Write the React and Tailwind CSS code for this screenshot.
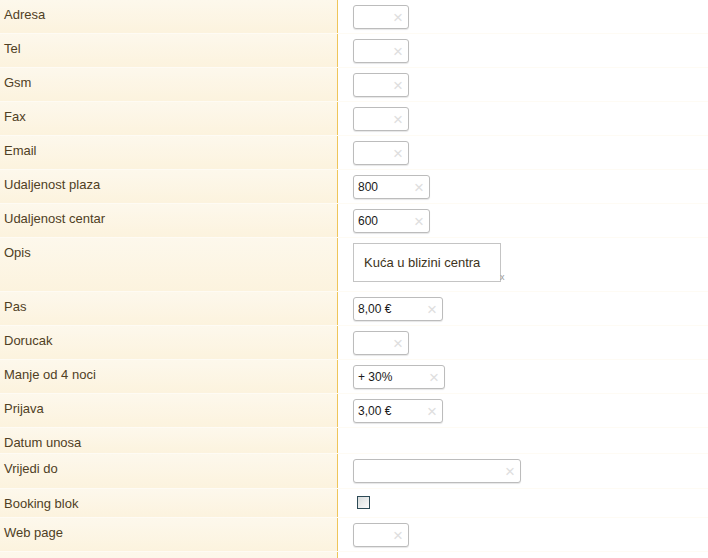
import React from 'react';

const rows = [
    { label: 'Adresa', kind: 'input', w: 'w-[56px]' },
    { label: 'Tel', kind: 'input', w: 'w-[56px]' },
    { label: 'Gsm', kind: 'input', w: 'w-[56px]' },
    { label: 'Fax', kind: 'input', w: 'w-[56px]' },
    { label: 'Email', kind: 'input', w: 'w-[56px]' },
    { label: 'Udaljenost plaza', kind: 'input', w: 'w-[77px]', value: '800' },
    { label: 'Udaljenost centar', kind: 'input', w: 'w-[77px]', value: '600' },
    { label: 'Opis', kind: 'textarea', h: 'h-[54px]' },
    { label: 'Pas', kind: 'input', w: 'w-[90px]', value: '8,00 €' },
    { label: 'Dorucak', kind: 'input', w: 'w-[56px]' },
    { label: 'Manje od 4 noci', kind: 'input', w: 'w-[92px]', value: '+ 30%' },
    { label: 'Prijava', kind: 'input', w: 'w-[90px]', value: '3,00 €' },
    { label: 'Datum unosa', kind: 'none', h: 'h-[26px]' },
    { label: 'Vrijedi do', kind: 'input', w: 'w-[168px]', h: 'h-[35px]' },
    { label: 'Booking blok', kind: 'checkbox', h: 'h-[29px]' },
    { label: 'Web page', kind: 'input', w: 'w-[56px]' },
    { label: '', kind: 'none' },
];

// text field with the little clear "x" on the right
const ClearInput = ({ w, value }) => (
    <div className={`flex items-center justify-between ${w} h-[24px] rounded-[3px] border border-[#bcbcbc] bg-white pl-[4px] pr-[5px] shadow-[0_1px_1px_rgba(0,0,0,0.1)]`}>
        <span className="text-[12px] leading-[16px] text-[#1a1a1a]">{value}</span>
        <span className="text-[17px] leading-[15px] text-[#dedede]">×</span>
    </div>
);

const Field = ({ row }) => {
    if (row.kind === 'input') return <ClearInput w={row.w} value={row.value} />;
    if (row.kind === 'textarea') {
        return (
            <div className="flex items-end">
                <div className="flex items-center w-[148px] h-[39px] border border-[#c4c4c4] bg-white pl-[10px]">
                    <span className="text-[13px] leading-[16px] text-[#3d3320]">Kuća u blizini centra</span>
                </div>
                <span className="text-[9px] leading-[9px] text-[#999] -ml-[1px]">x</span>
            </div>
        );
    }
    if (row.kind === 'checkbox') {
        return (
            <div className="ml-[4px] mt-[2px] w-[13px] h-[13px] border border-[#2d4a56] bg-gradient-to-br from-[#d8dcdc] to-[#fbfbfb]" />
        );
    }
    return null;
};

const App = () => {
    return (
        <div className="w-[708px] h-[558px] overflow-hidden bg-white font-['Liberation_Sans',Arial,sans-serif]">
            {rows.map((row, i) => (
                <div key={i} className={`flex ${row.h || 'h-[34px]'} border-b border-[#fefbf4]`}>
                    <div className="w-[338px] shrink-0 border-r border-[#efc55a] bg-gradient-to-b from-[#fdf8ec] to-[#fcf3de] pl-[4px] pt-[2px]">
                        <span className="text-[13px] leading-[16px] text-[#4f4024]">{row.label}</span>
                    </div>
                    <div className="flex-1 bg-white pl-[15px] pt-[5px]">
                        <Field row={row} />
                    </div>
                </div>
            ))}
        </div>
    );
};

export default App;
